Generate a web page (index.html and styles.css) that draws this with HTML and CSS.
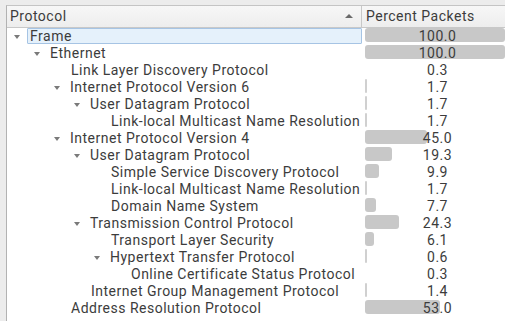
FILE: index.html
```html
<!DOCTYPE html>
<html lang="en">
<head>
  <meta charset="UTF-8">
  <title>Protocol Hierarchy Statistics</title>
  <link rel="stylesheet" href="styles.css">
</head>
<body>
  <div class="view">
    <div class="header">
      <div class="head-proto">Protocol<span class="sort"></span></div>
      <div class="head-pct">Percent Packets</div>
    </div>
    <div class="rows">
      <div class="row selected"><div class="proto lvl0"><span class="arrow"></span><span class="label">Frame</span></div><div class="pct"><span class="bar" style="width:140px"></span><span class="num">100.0</span></div></div>
      <div class="row"><div class="proto lvl1"><span class="arrow"></span><span class="label">Ethernet</span></div><div class="pct"><span class="bar" style="width:140px"></span><span class="num">100.0</span></div></div>
      <div class="row"><div class="proto lvl2"><span class="leaf"></span><span class="label">Link Layer Discovery Protocol</span></div><div class="pct"><span class="num">0.3</span></div></div>
      <div class="row"><div class="proto lvl2"><span class="arrow"></span><span class="label">Internet Protocol Version 6</span></div><div class="pct"><span class="bar thin"></span><span class="num">1.7</span></div></div>
      <div class="row"><div class="proto lvl3"><span class="arrow"></span><span class="label">User Datagram Protocol</span></div><div class="pct"><span class="bar thin"></span><span class="num">1.7</span></div></div>
      <div class="row"><div class="proto lvl4"><span class="leaf"></span><span class="label">Link-local Multicast Name Resolution</span></div><div class="pct"><span class="bar thin"></span><span class="num">1.7</span></div></div>
      <div class="row"><div class="proto lvl2"><span class="arrow"></span><span class="label">Internet Protocol Version 4</span></div><div class="pct"><span class="bar" style="width:62px"></span><span class="num">45.0</span></div></div>
      <div class="row"><div class="proto lvl3"><span class="arrow"></span><span class="label">User Datagram Protocol</span></div><div class="pct"><span class="bar" style="width:27px"></span><span class="num">19.3</span></div></div>
      <div class="row"><div class="proto lvl4"><span class="leaf"></span><span class="label">Simple Service Discovery Protocol</span></div><div class="pct"><span class="bar" style="width:14px"></span><span class="num">9.9</span></div></div>
      <div class="row"><div class="proto lvl4"><span class="leaf"></span><span class="label">Link-local Multicast Name Resolution</span></div><div class="pct"><span class="bar thin"></span><span class="num">1.7</span></div></div>
      <div class="row"><div class="proto lvl4"><span class="leaf"></span><span class="label">Domain Name System</span></div><div class="pct"><span class="bar" style="width:11px"></span><span class="num">7.7</span></div></div>
      <div class="row"><div class="proto lvl3"><span class="arrow"></span><span class="label">Transmission Control Protocol</span></div><div class="pct"><span class="bar" style="width:34px"></span><span class="num">24.3</span></div></div>
      <div class="row"><div class="proto lvl4"><span class="leaf"></span><span class="label">Transport Layer Security</span></div><div class="pct"><span class="bar" style="width:9px"></span><span class="num">6.1</span></div></div>
      <div class="row"><div class="proto lvl4"><span class="arrow"></span><span class="label">Hypertext Transfer Protocol</span></div><div class="pct"><span class="bar thin"></span><span class="num">0.6</span></div></div>
      <div class="row"><div class="proto lvl5"><span class="leaf"></span><span class="label">Online Certificate Status Protocol</span></div><div class="pct"><span class="num">0.3</span></div></div>
      <div class="row"><div class="proto lvl3"><span class="leaf"></span><span class="label">Internet Group Management Protocol</span></div><div class="pct"><span class="bar thin"></span><span class="num">1.4</span></div></div>
      <div class="row"><div class="proto lvl2"><span class="leaf"></span><span class="label">Address Resolution Protocol</span></div><div class="pct"><span class="bar" style="width:75px"></span><span class="num">53.0</span></div></div>
    </div>
  </div>
</body>
</html>
```
FILE: styles.css
```css
body {
  margin: 0;
  padding: 5px 0 0 6px;
  background: #ececec;
  font-family: Roboto, 'Noto Sans', sans-serif;
  font-size: 14px;
  letter-spacing: 0.5px;
  color: #3c3c3c;
  width: 505px;
  height: 321px;
  box-sizing: border-box;
  overflow: hidden;
}
.view {
  width: 520px;
  height: 330px;
  background: #fff;
  border-top: 1px solid #c4c4c4;
  border-left: 1px solid #b2b2b2;
}
.header {
  display: flex;
  height: 21px;
  background: linear-gradient(#f7f7f7, #ededed);
  border-bottom: 1px solid #c8c8c8;
  line-height: 21px;
}
.head-proto {
  width: 355px;
  box-sizing: border-box;
  padding-left: 3px;
  border-right: 1px solid #c8c8c8;
  position: relative;
}
.sort {
  position: absolute;
  right: 8px;
  top: 8px;
  width: 0;
  height: 0;
  border-left: 4px solid transparent;
  border-right: 4px solid transparent;
  border-bottom: 4px solid #6a6a6a;
}
.head-pct {
  padding-left: 4px;
}
.row {
  display: flex;
  height: 17px;
  line-height: 17px;
}
.proto {
  width: 355px;
  display: flex;
  align-items: flex-start;
  box-sizing: border-box;
  white-space: nowrap;
}
.lvl0 { padding-left: 7px; }
.lvl1 { padding-left: 27px; }
.lvl2 { padding-left: 47px; }
.lvl3 { padding-left: 67px; }
.lvl4 { padding-left: 87px; }
.lvl5 { padding-left: 107px; }
.arrow {
  width: 0;
  height: 0;
  margin-top: 7px;
  margin-right: 10px;
  border-left: 3.5px solid transparent;
  border-right: 3.5px solid transparent;
  border-top: 4px solid #7a7a7a;
}
.leaf {
  width: 17px;
}
.selected .label {
  flex: 1;
  margin-left: -3px;
  padding-left: 2px;
  height: 14px;
  line-height: 15px;
  background: #e5f1fb;
  border: 1px solid #a6c4e4;
  border-radius: 1px;
}
.pct {
  position: relative;
  width: 145px;
  padding-left: 3px;
  text-align: center;
}
.bar {
  position: absolute;
  left: 3px;
  top: 0;
  height: 14px;
  background: #c8c8c8;
  border-radius: 3px;
}
.bar.thin {
  width: 2px;
  border-radius: 1px;
  background: #d0d0d0;
}
.num {
  position: relative;
}
```
